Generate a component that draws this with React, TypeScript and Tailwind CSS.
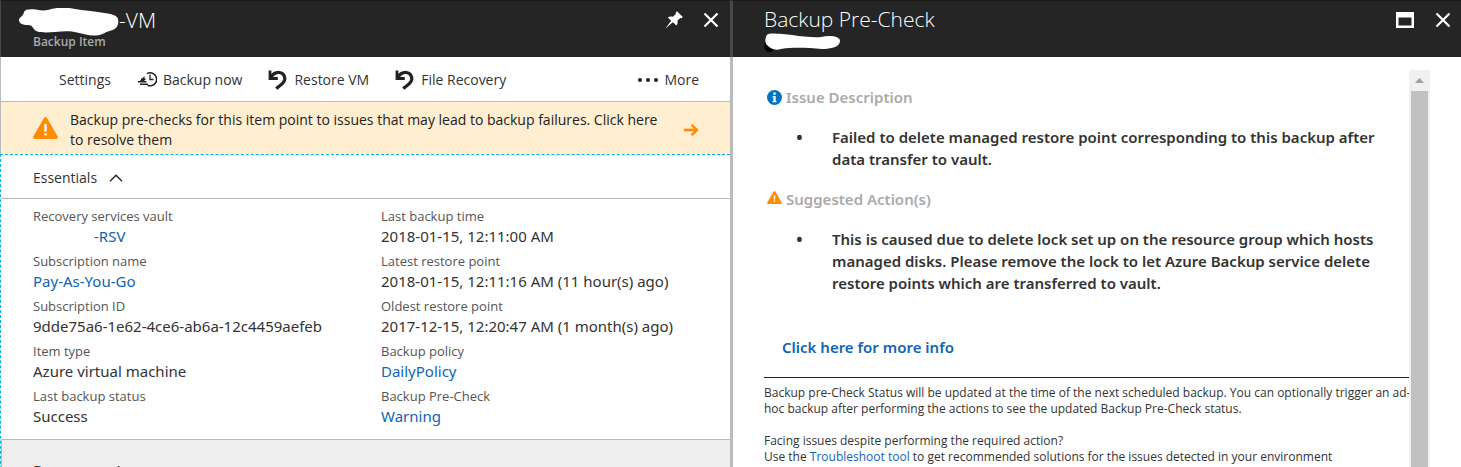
import type { ReactNode } from "react";

type Field = { label: string; value: string; link?: boolean; indent?: boolean };

const leftFields: Field[] = [
  { label: "Recovery services vault", value: "-RSV", link: true, indent: true },
  { label: "Subscription name", value: "Pay-As-You-Go", link: true },
  { label: "Subscription ID", value: "9dde75a6-1e62-4ce6-ab6a-12c4459aefeb" },
  { label: "Item type", value: "Azure virtual machine" },
  { label: "Last backup status", value: "Success" },
];

const rightFields: Field[] = [
  { label: "Last backup time", value: "2018-01-15, 12:11:00 AM" },
  { label: "Latest restore point", value: "2018-01-15, 12:11:16 AM (11 hour(s) ago)" },
  { label: "Oldest restore point", value: "2017-12-15, 12:20:47 AM (1 month(s) ago)" },
  { label: "Backup policy", value: "DailyPolicy", link: true },
  { label: "Backup Pre-Check", value: "Warning", link: true },
];

function CloseIcon() {
  return (
    <svg width="16" height="16" viewBox="0 0 16 16" stroke="#fff" strokeWidth="2.200" fill="none" aria-hidden="true">
      <path d="M1.500 1.500 14.500 14.500M14.500 1.500 1.500 14.500" />
    </svg>
  );
}

function PinIcon() {
  return (
    <svg width="18" height="18" viewBox="0 0 18 18" fill="#fff" aria-hidden="true">
      <path d="M12 .2 17.800 6 16.600 7.200 15.200 6.900 12.400 9.700C12.900 11.600 12.500 13.200 11.400 14.600L7.800 11.200.2 17.800 6.200 9.700 2.800 6.400C4.400 5.400 6.200 5.200 8 5.700L11 2.800 10.700 1.400Z" />
    </svg>
  );
}

function MaximizeIcon() {
  return (
    <svg width="18" height="16" viewBox="0 0 18 16" aria-hidden="true">
      <path fill="#fff" fillRule="evenodd" d="M0 0H18V16H0ZM2.500 5.500V13.500H15.500V5.500Z" />
    </svg>
  );
}

function BackupIcon() {
  return (
    <svg width="20" height="17" viewBox="0 0 20 17" fill="none" stroke="#222" aria-hidden="true">
      <path d="M10 2.600A6.500 6.500 0 1 1 10.500 14.200" strokeWidth="1.500" />
      <path d="M13 3.500V8.500H16.500" strokeWidth="1.300" />
      <path d="M4 8.300H8.500M1 10.800H9.500M3 13.300H11" strokeWidth="1.500" />
      <path d="M2.500 10.500 7.500 5V10.500Z" fill="#222" stroke="none" />
    </svg>
  );
}

function UndoIcon() {
  return (
    <svg width="20" height="20" viewBox="0 0 20 20" fill="none" stroke="#222" aria-hidden="true">
      <path d="M2.500 8C5 3.500 8.500 2.200 11.500 2.500C16 3 18 8 16 11.500C14.500 14.300 11 16 8.300 18.600" strokeWidth="3.200" />
      <path d="M2 .5V8.500H9.800" strokeWidth="2.800" />
    </svg>
  );
}

function WarningIcon({ className }: { className: string }) {
  return (
    <svg className={className} viewBox="0 0 25 22" aria-hidden="true">
      <path d="M11 .9Q12.500-.8 14 .9L24.700 19.500Q25.400 22 23.200 22H1.800Q-.4 22 .3 19.500Z" fill="#ff8c00" />
      <path d="M11.300 7H13.700V14.500H11.300ZM11.300 16.200H13.700V18.600H11.300Z" fill="#fff" />
    </svg>
  );
}

function InfoIcon() {
  return (
    <svg width="15" height="15" viewBox="0 0 15 15" aria-hidden="true">
      <circle cx="7.500" cy="7.500" r="7.500" fill="#0072c6" />
      <path d="M6.300 2.500H8.700V4.700H6.300ZM5.600 6H8.700V11H9.500V12.200H5.500V11H6.400V7.200H5.600Z" fill="#fff" />
    </svg>
  );
}

function ToolButton({ icon, children }: { icon?: ReactNode; children: ReactNode }) {
  return (
    <button type="button" className="flex items-center gap-1.5 whitespace-nowrap">
      {icon}
      {children}
    </button>
  );
}

function FieldList({ fields }: { fields: Field[] }) {
  return (
    <dl>
      {fields.map((f) => (
        <div key={f.label} className="h-[45px]">
          <dt className="text-[13px] leading-5 text-[#555]">{f.label}</dt>
          <dd
            className={
              f.indent
                ? "pl-[61px] font-['Noto_Sans',sans-serif] text-[15px] leading-[21px]"
                : "font-['Noto_Sans',sans-serif] text-[15px] leading-[21px]"
            }
          >
            {f.link ? (
              <a href="#" className="text-[#1164b4]">
                {f.value}
              </a>
            ) : (
              f.value
            )}
          </dd>
        </div>
      ))}
    </dl>
  );
}

function Bullet({ children }: { children: ReactNode }) {
  return (
    <li className="flex before:w-9 before:shrink-0 before:text-lg before:leading-[22px] before:content-['•']">
      <span>{children}</span>
    </li>
  );
}

function BackupItemBlade() {
  return (
    <section className="flex min-w-0 flex-col">
      <header className="flex h-[57px] shrink-0 justify-between border-t border-l border-t-[#1a1a1a] border-l-[#484848] bg-[#252525] pr-[11px] pl-[18px]">
        <div>
          <h1 className="flex h-[33px] items-center pt-1 text-[21px] font-light text-white">
            <svg className="mt-1" width="100" height="28" viewBox="0 0 100 28" aria-hidden="true">
              <path
                d="M5 4C6 1 11 1 17 1.500C22 2.500 27 3 32 1C41-1 50-.5 56 1C65 2.500 73 3 82 4.500C92 5.500 98 7 99 11C100 17 98 21 92 22.500C86 24 84 27 77 27.500C70 28 65 26 58 24.500C51 22.500 44 23 36 24C29 24.500 22 25 17 23C13 20 14 17 9 17C3 17 0 15 0 12C0 9 4 9 5 4Z"
                fill="#fff"
              />
            </svg>
            -VM
          </h1>
          <p className="pl-[14px] text-xs leading-4 font-semibold text-[#aaa]">Backup Item</p>
        </div>
        <div className="flex h-[38px] items-center gap-5">
          <button type="button" aria-label="Pin">
            <PinIcon />
          </button>
          <button type="button" aria-label="Close">
            <CloseIcon />
          </button>
        </div>
      </header>

      <nav className="flex h-[45px] shrink-0 items-center justify-between border-b border-l border-[#bababa] pt-px pr-[31px] pl-[58px]">
        <div className="flex items-center gap-[26px]">
          <ToolButton>Settings</ToolButton>
          <ToolButton icon={<BackupIcon />}>Backup now</ToolButton>
          <ToolButton icon={<UndoIcon />}>Restore VM</ToolButton>
          <ToolButton icon={<UndoIcon />}>File Recovery</ToolButton>
        </div>
        <ToolButton
          icon={
            <svg width="20" height="4" viewBox="0 0 20 4" fill="#222" aria-hidden="true">
              <circle cx="2" cy="2" r="2" />
              <circle cx="10" cy="2" r="2" />
              <circle cx="18" cy="2" r="2" />
            </svg>
          }
        >
          More
        </ToolButton>
      </nav>

      <a href="#" className="flex h-[52px] shrink-0 items-center gap-3 border-l border-[#bababa] bg-[#ffeed0] pt-1 pr-[31px] pl-8 text-[#222]">
        <WarningIcon className="mb-1 h-[22px] w-[25px] shrink-0" />
        <span className="flex-1 leading-5">
          Backup pre-checks for this item point to issues that may lead to backup failures. Click here to resolve them
        </span>
        <svg className="shrink-0" width="15" height="12" viewBox="0 0 15 12" fill="none" stroke="#ff8c00" aria-hidden="true">
          <path d="M0 6H13" strokeWidth="2.600" />
          <path d="M7.500 .8 13 6 7.500 11.200" strokeWidth="2.400" />
        </svg>
      </a>

      <div className="flex min-h-0 flex-1 flex-col border-t border-l border-dashed border-[#00b4e6]">
        <button type="button" className="flex h-11 shrink-0 items-center gap-3 border-b border-solid border-[#bababa] pt-0.5 pl-8">
          Essentials
          <svg width="14" height="8" viewBox="0 0 14 8" fill="none" stroke="#222" strokeWidth="1.400" aria-hidden="true">
            <path d="M1 7.300 7 1.200 13 7.300" />
          </svg>
        </button>
        <div className="grid shrink-0 grid-cols-[348px_1fr] pt-[7px] pb-2 pl-8">
          <FieldList fields={leftFields} />
          <FieldList fields={rightFields} />
        </div>
        <div className="flex-1 border-t border-l border-solid border-[#bababa] bg-[#eee] pt-5 pl-[31px]">
          <h2 className="text-base leading-6 font-semibold">Restore points</h2>
        </div>
      </div>
    </section>
  );
}

function PreCheckBlade() {
  return (
    <section className="flex min-w-0 flex-col">
      <header className="flex h-[57px] shrink-0 justify-between border-t border-l-3 border-t-[#1a1a1a] border-l-[#484848] bg-[#252525] pr-2.5 pl-[31px]">
        <div>
          <h1 className="pt-1 text-[21px] leading-[28px] font-light text-white">Backup Pre-Check</h1>
          <svg width="77" height="20" viewBox="0 0 77 20" aria-hidden="true">
            <path d="M2 7C-1 11 0 19 5 19C10 19 10 16 8 14Z" fill="#000" />
            <path
              d="M2 4C3-1 10 1 18 1C31 2 44 5 57 4C66 2 76 3 76 8C76 14 67 16 58 16C44 15 31 14 17 16C10 18 6 15 3 12C1 10 1 7 2 4Z"
              fill="#fff"
            />
          </svg>
        </div>
        <div className="flex h-[38px] items-center gap-[21px]">
          <button type="button" aria-label="Maximize">
            <MaximizeIcon />
          </button>
          <button type="button" aria-label="Close">
            <CloseIcon />
          </button>
        </div>
      </header>

      <div className="flex min-h-0 flex-1 border-l-3 border-[#bababa] pt-[13px] pr-[31px] pl-[31px]">
        <div className="min-w-0 flex-1 pt-[15px] text-[15px]">
          <div className="font-['Noto_Sans',sans-serif] font-semibold">
            <h2 className="flex items-center gap-1 pl-[3px] leading-6 text-[#aaa]">
              <InfoIcon />
              Issue Description
            </h2>
            <ul className="pt-[17px] pr-5 pl-8 leading-[22px]">
              <Bullet>
                Failed to delete managed restore point corresponding to this backup after data transfer to vault.
              </Bullet>
            </ul>
            <h2 className="mt-[17px] flex items-center gap-1 pl-[3px] leading-6 text-[#aaa]">
              <WarningIcon className="mb-1 h-[13px] w-[15px]" />
              Suggested Action(s)
            </h2>
            <ul className="pt-[17px] pr-5 pl-8 leading-[22px]">
              <Bullet>
                This is caused due to delete lock set up on the resource group which hosts managed disks. Please remove
                the lock to let Azure Backup service delete restore points which are transferred to vault.
              </Bullet>
            </ul>
            <a href="#" className="mt-[42px] ml-[18px] block leading-[22px] text-[#1164b4]">
              Click here for more info
            </a>
          </div>
          <hr className="mt-[19px] border-[#222]" />
          <div className="-mr-1 pt-[7px] text-xs leading-4">
            <p>
              Backup pre-Check Status will be updated at the time of the next scheduled backup. You can optionally trigger
              an ad-hoc backup after performing the actions to see the updated Backup Pre-Check status.
            </p>
            <p className="mt-4">Facing issues despite performing the required action?</p>
            <p>
              Use the{" "}
              <a href="#" className="text-[#1164b4]">
                Troubleshoot tool
              </a>{" "}
              to get recommended solutions for the issues detected in your environment
            </p>
          </div>
        </div>
        <div className="flex w-[21px] shrink-0 flex-col bg-[#f0f0f0]">
          <div className="flex h-[21px] items-center justify-center">
            <svg width="9" height="5" viewBox="0 0 9 5" fill="#a0a0a0" aria-hidden="true">
              <path d="M4.500 0 9 5H0Z" />
            </svg>
          </div>
          <div className="mx-0.5 flex-1 bg-[#c1c1c1]" />
        </div>
      </div>
    </section>
  );
}

export default function App() {
  return (
    <main className="grid h-screen grid-cols-[730fr_731fr] overflow-hidden bg-white font-['Open_Sans','Noto_Sans',sans-serif] text-sm text-[#333]">
      <BackupItemBlade />
      <PreCheckBlade />
    </main>
  );
}
